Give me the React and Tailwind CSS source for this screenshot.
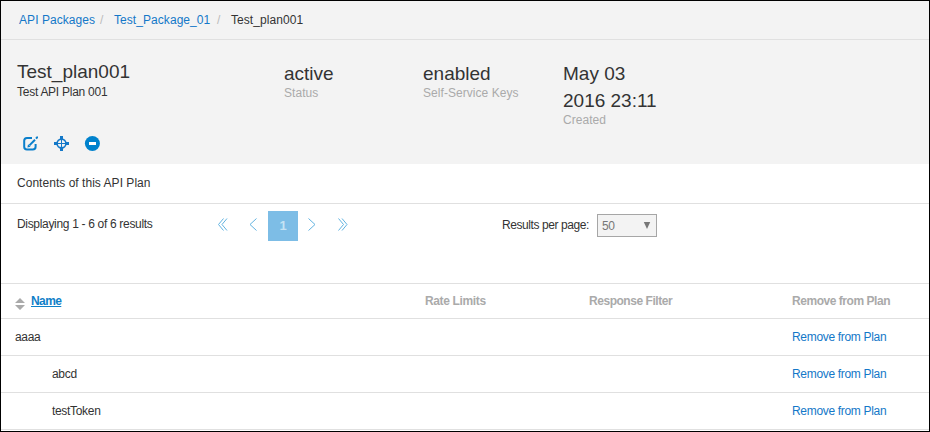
const FONT = "font-['Liberation_Sans',Arial,sans-serif]";

function EditIcon() {
  return (
    <svg width="16" height="16" viewBox="0 0 16 16" fill="none" stroke="#0a7fcb" strokeWidth="2">
      <path d="M10 3H5Q2.2 3 2.2 5.8V11.7Q2.2 14.5 5 14.5H10.8Q13.6 14.5 13.6 11.7V9" />
      <path d="M7.4 10.4L13 4.8" />
      <path d="M14 3.6L15.8 1.8" />
      <path d="M5.4 12.4L6 9.2L8.6 11.8Z" fill="#0a7fcb" stroke="none" />
    </svg>
  );
}

function TargetIcon() {
  return (
    <svg width="16" height="16" viewBox="0 0 16 16" fill="none" stroke="#1478c8">
      <path d="M8.5 1V5M8.5 12V16M1 8.5H5M12 8.5H16" strokeWidth="3" />
      <circle cx="8.5" cy="8.5" r="4.4" strokeWidth="1.6" />
      <path d="M8.5 5V12M5 8.5H12" strokeWidth="1" />
    </svg>
  );
}

function RemoveIcon() {
  return (
    <svg width="16" height="16" viewBox="0 0 16 16">
      <circle cx="8.4" cy="8.5" r="7.5" fill="#0082cd" />
      <rect x="5" y="7" width="7" height="3" fill="#fff" />
    </svg>
  );
}

function Chevron({ d, w }) {
  return (
    <svg className="mb-[3px]" width={w} height="13" viewBox={`0 0 ${w} 13`} fill="none" stroke="#62b3e0" strokeWidth="1">
      <path d={d} />
    </svg>
  );
}

function Row({ name, indent }) {
  return (
    <div className="flex h-[37px] items-center border-b border-[#e0e0e0] tracking-[-0.32px]">
      <div className={indent ? "w-[791px] pl-[51px]" : "w-[791px] pl-[14px]"}>{name}</div>
      <a className="text-[#1478c8]">Remove from Plan</a>
    </div>
  );
}

function Stat({ value, label, width }) {
  return (
    <div className={width}>
      <div className="text-[19px] leading-[27px]">{value}</div>
      <div className="text-[12px] leading-[12px] tracking-[0.05px] text-[#aaa]">{label}</div>
    </div>
  );
}

export default function App() {
  return (
    <div className={`h-[432px] w-[930px] overflow-hidden border border-black bg-white text-[12px] leading-[16px] text-[#333] ${FONT}`}>
      <div className="h-[163px] bg-[#f3f3f3]">
        <nav className="flex h-[39px] items-center border-b border-[#e0e0e0] pl-[18px] tracking-[0.06px]">
          <a className="w-[81px] text-[#1478c8]">API Packages</a>
          <span className="w-[14px] text-[#bbb]">/</span>
          <a className="w-[103px] text-[#1478c8]">Test_Package_01</a>
          <span className="w-[14px] text-[#bbb]">/</span>
          <span>Test_plan001</span>
        </nav>
        <div className="flex h-[95px] pl-[16px]">
          <div className="w-[267px] pt-[18px]">
            <div className="text-[19px] leading-[27px]">Test_plan001</div>
            <div className="pt-px leading-[13px] tracking-[-0.26px]">Test API Plan 001</div>
          </div>
          <div className="flex pt-[20px]">
            <Stat width="w-[139px]" value="active" label="Status" />
            <Stat width="w-[140px]" value="enabled" label="Self-Service Keys" />
            <Stat width="w-[110px]" value={<>May 03<br />2016 23:11</>} label="Created" />
          </div>
        </div>
        <div className="flex gap-[15px] pl-[21px]">
          <EditIcon />
          <TargetIcon />
          <RemoveIcon />
        </div>
      </div>
      <div className="flex h-[40px] items-center border-b border-[#e0e0e0] pb-[2px] pl-[16px] tracking-[0.03px]">Contents of this API Plan</div>
      <div className="flex h-[79px] items-start pt-[7px]">
        <div className="w-[201px] pt-[5px] pl-[16px] tracking-[-0.32px]">Displaying 1 - 6 of 6 results</div>
        <div className="flex h-[30px] w-[300px] items-center pl-[16px]">
          <Chevron w={10} d="M5.5 .5L.5 6.5L5.5 12.5M9 .5L4 6.5L9 12.5" />
          <div className="w-[21px]" />
          <Chevron w={8} d="M7.5 .5L1 6.5L7.5 12.5" />
          <div className="ml-[11px] flex h-[30px] w-[30px] items-center justify-center bg-[#7dbde6] pb-px text-[13px] font-bold text-[#c5e3f4]">1</div>
          <div className="w-[10px]" />
          <Chevron w={8} d="M.5 .5L7 6.5L.5 12.5" />
          <div className="w-[22px]" />
          <Chevron w={10} d="M.5 .5L5.5 6.5L.5 12.5M4 .5L9 6.5L4 12.5" />
        </div>
        <div className="flex">
          <div className="w-[95px] pt-[6px] tracking-[-0.42px]">Results per page:</div>
          <div className="mt-[3px] flex h-[23px] w-[60px] items-center justify-between border border-[#a6a6a6] bg-[#f3f3f3] pr-[5px] pl-[4px] text-[#777]">
            <span className="tracking-[-0.3px]">50</span>
            <svg className="mb-px" width="8" height="7" viewBox="0 0 8 7"><path d="M.8 0H7.2L4 7Z" fill="#777" /></svg>
          </div>
        </div>
      </div>
      <div className="flex h-[36px] items-center border-y border-[#e0e0e0] font-bold tracking-[-0.46px] text-[#aaa]">
        <div className="flex w-[424px] items-center gap-[6px] pl-[14px]">
          <svg className="mt-[5px]" width="10" height="12" viewBox="0 0 10 12"><path d="M0 5L5 0L10 5ZM0 7H10L5 12Z" fill="#aaa" /></svg>
          <a className="tracking-[-0.6px] text-[#1080c8] underline">Name</a>
        </div>
        <div className="w-[164px] tracking-[-0.36px]">Rate Limits</div>
        <div className="w-[203px]">Response Filter</div>
        <div>Remove from Plan</div>
      </div>
      <Row name="aaaa" />
      <Row name="abcd" indent />
      <Row name="testToken" indent />
    </div>
  );
}
